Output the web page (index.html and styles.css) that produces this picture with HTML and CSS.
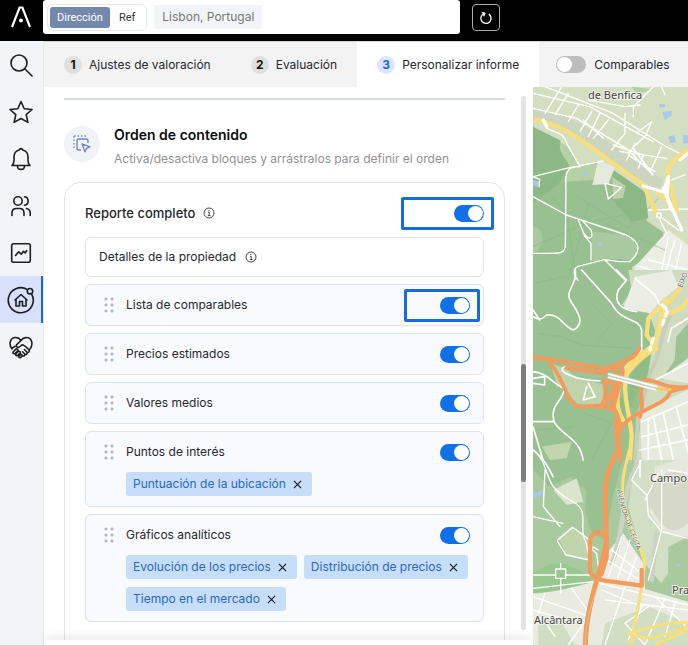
FILE: index.html
```html
<!DOCTYPE html>
<html lang="es">
<head>
<meta charset="utf-8">
<meta name="viewport" content="width=device-width, initial-scale=1">
<title>Personalizar informe</title>
<link rel="stylesheet" href="styles.css">
</head>
<body>
<div class="app">
  <header class="topbar">
    <a class="logo" href="#" aria-label="Inicio">
      <svg width="20" height="22" viewBox="0 0 20 22" fill="none" stroke="#fff" stroke-width="2.2"><path d="M1 21 8.600 1.500h2.800L19 21"/><circle cx="10" cy="14.500" r="2" fill="#fff" stroke="none"/></svg>
    </a>
    <div class="search">
      <div class="mode">
        <button class="mode-btn mode-on" type="button">Dirección</button>
        <button class="mode-btn" type="button">Ref</button>
      </div>
      <span class="place">Lisbon, Portugal</span>
      <input class="search-input" type="text" aria-label="Buscar">
    </div>
    <button class="reload" type="button" aria-label="Restablecer">
      <svg width="14" height="14" viewBox="0 0 14 14" fill="none" stroke="#fff" stroke-width="1.300"><path d="M9.800 3.100A5.100 5.100 0 1 1 5 2.600M2.800 1.400l3.100.9-1.200 3"/></svg>
    </button>
  </header>

  <nav class="side" aria-label="Principal">
    <a class="side-link" href="#" aria-label="Buscar"><svg width="24" height="24" viewBox="0 0 24 24"><circle cx="10" cy="10" r="8"/><path d="m16 16 7 7"/></svg></a>
    <a class="side-link" href="#" aria-label="Favoritos"><svg width="24" height="24" viewBox="0 0 24 24"><path d="m12 1.500 3.200 7.200 7.800.8-5.800 5.200 1.700 7.700L12 18.500l-6.900 3.900 1.700-7.700L1 9.500l7.800-.8z"/></svg></a>
    <a class="side-link" href="#" aria-label="Avisos"><svg width="24" height="24" viewBox="0 0 24 24"><path d="M3 18.500h18c-1.600-1.500-2-3-2-5V10c0-3.700-2.400-6.300-5.300-7a1.750 1.750 0 0 0-3.400 0C7.400 3.700 5 6.300 5 10v3.500c0 2-.4 3.500-2 5zM8.500 19c0 4.500 7 4.500 7 0"/></svg></a>
    <a class="side-link" href="#" aria-label="Contactos"><svg width="24" height="24" viewBox="0 0 24 24"><circle cx="9" cy="7" r="4.200"/><path d="M3 21.500V19c0-3 2-4.500 4.500-4.500h3c2.500 0 4.500 1.500 4.500 4.500v2.500M15.500 2.800c4.800.8 4.800 7.700 0 8.500M17.500 14.500c2.500.6 3.700 2 3.700 4.500v2.500"/></svg></a>
    <a class="side-link" href="#" aria-label="Mercado"><svg width="24" height="24" viewBox="0 0 24 24"><rect x="2.700" y="2.700" width="18.600" height="18.600" rx="2"/><path d="m6.500 14.500 3.200-3.700 2.600 2.400 2.200-2.900 1.500 1.700 1.700-2.300"/></svg></a>
    <a class="side-link side-active" href="#" aria-label="Valoración"><svg width="28" height="28" viewBox="0 0 28 28"><path d="M20.500 3.700A12.500 12.500 0 1 0 24.600 8"/><circle cx="23" cy="5.200" r="2.700"/><path d="m8 14 6-5.500 6 5.500M9 13.200V20h3.500v-4.500h3V20H19v-6.800"/></svg></a>
    <a class="side-link" href="#" aria-label="Colaboración"><svg width="24" height="24" viewBox="0 0 24 24"><path d="M3 14C-.5 9.500 1 2.500 6.500 2.500c2.500 0 4.200 1 5.500 3 1.300-2 3-3 5.500-3C23 2.500 24.500 9.500 21 14M12 5.500 7.500 9.800c-.8 2.500 2 3.200 3.500 1.700l2-1.700c2.500.2 5 3.200 7 5.200 1 1.700-.7 3-2 2.200M15.500 14.500l2.500 2.700c.8 1.500-1 2.800-2.200 1.800l-2.300-2.300M15.800 19c.5 1.500-1.200 2.600-2.500 1.500l-2-2M3 13l3-1.500M4.300 16.700l2.300-2.300c1.300-1.300 3 .3 1.900 1.600l-2.300 2.300c-1.300 1.100-3-.4-1.900-1.600zM7 18.700l2-2c1.300-1.100 2.900.4 1.800 1.600l-1.900 1.900c-1.300 1.100-2.900-.4-1.900-1.500zM10 21l1.300-1.200c1.200-.9 2.500.3 1.600 1.500l-1 1c-1.100.9-2.800-.2-1.900-1.300z"/></svg></a>
  </nav>

  <main class="content">
    <div class="steps">
      <a class="step" href="#"><span class="num">1</span>Ajustes de valoración</a>
      <a class="step" href="#"><span class="num">2</span>Evaluación</a>
      <a class="step step-on" href="#" aria-current="step"><span class="num">3</span>Personalizar informe</a>
      <label class="compare"><input class="toggle toggle-soft" type="checkbox"><span class="compare-text">Comparables</span></label>
    </div>

    <div class="work">
      <section class="panel">
        <div class="scroll">
          <hr class="rule">
          <div class="intro">
            <span class="intro-icon">
              <svg width="20" height="20" viewBox="0 0 20 20" fill="none" stroke="#6d87b5" stroke-width="1.300" stroke-linejoin="round"><path d="M2 2h12" stroke-dasharray="1.500 2"/><path d="M2 2v12" stroke-dasharray="1.500 2"/><path d="M9 16H7a2 2 0 0 1-2-2V7a2 2 0 0 1 2-2h7a2 2 0 0 1 2 2v2"/><path d="m10 9.800 8 3-3.500 1.600-1.600 3.500z"/></svg>
            </span>
            <div>
              <h1 class="title">Orden de contenido</h1>
              <p class="subtitle">Activa/desactiva bloques y arrástralos para definir el orden</p>
            </div>
          </div>

          <div class="report">
            <div class="report-head">
              <label class="report-name" for="t-all">Reporte completo</label>
              <svg class="info" viewBox="0 0 12 12"><circle cx="6" cy="6" r="5"/><path d="M5 5.300h1.200v3.200M4.800 8.600h2.700M5.900 3v1"/></svg>
              <span class="switch switch-marked mark-wide"><input class="toggle" id="t-all" type="checkbox" checked></span>
            </div>
            <ul class="blocks">
              <li class="block block-fixed">
                <span>Detalles de la propiedad</span>
                <svg class="info" viewBox="0 0 12 12"><circle cx="6" cy="6" r="5"/><path d="M5 5.300h1.200v3.200M4.800 8.600h2.700M5.900 3v1"/></svg>
              </li>
              <li class="block">
                <div class="block-head"><span class="grip"></span><label for="t1">Lista de comparables</label><span class="switch switch-marked"><input class="toggle" id="t1" type="checkbox" checked></span></div>
              </li>
              <li class="block">
                <div class="block-head"><span class="grip"></span><label for="t2">Precios estimados</label><span class="switch"><input class="toggle" id="t2" type="checkbox" checked></span></div>
              </li>
              <li class="block">
                <div class="block-head"><span class="grip"></span><label for="t3">Valores medios</label><span class="switch"><input class="toggle" id="t3" type="checkbox" checked></span></div>
              </li>
              <li class="block">
                <div class="block-head"><span class="grip"></span><label for="t4">Puntos de interés</label><span class="switch"><input class="toggle" id="t4" type="checkbox" checked></span></div>
                <div class="tags">
                  <span class="tag">Puntuación de la ubicación<button class="tag-x" type="button" aria-label="Quitar"><svg viewBox="0 0 10 10"><path d="m1 1 8 8M9 1 1 9"/></svg></button></span>
                </div>
              </li>
              <li class="block">
                <div class="block-head"><span class="grip"></span><label for="t5">Gráficos analíticos</label><span class="switch"><input class="toggle" id="t5" type="checkbox" checked></span></div>
                <div class="tags">
                  <span class="tag">Evolución de los precios<button class="tag-x" type="button" aria-label="Quitar"><svg viewBox="0 0 10 10"><path d="m1 1 8 8M9 1 1 9"/></svg></button></span>
                  <span class="tag">Distribución de precios<button class="tag-x" type="button" aria-label="Quitar"><svg viewBox="0 0 10 10"><path d="m1 1 8 8M9 1 1 9"/></svg></button></span>
                  <span class="tag">Tiempo en el mercado<button class="tag-x" type="button" aria-label="Quitar"><svg viewBox="0 0 10 10"><path d="m1 1 8 8M9 1 1 9"/></svg></button></span>
                </div>
              </li>
            </ul>
          </div>
        </div>
        <div class="track"><div class="thumb"></div></div>
        <div class="foot"></div>
      </section>

      <section class="map" aria-label="Mapa">
        <svg viewBox="0 0 155 558" preserveAspectRatio="xMinYMin slice" fill="none" stroke-linecap="round" stroke-linejoin="round">
          <rect width="155" height="558" fill="#98c090"/>
          <!-- north: Benfica and the park edge -->
          <g transform="translate(-8 -7) scale(.33333)">
            <path d="M24 20H489V600H330l-10-38 90-60 5-45-50-35-5-80-80-60-60-16-90-10-30-60-76-36z" fill="#d3dfc0"/>
            <path d="M24 140l80 40 28 75-30 55-78 60z" fill="#8bb885"/>
            <path d="m265 270 95 65 10 80-50 10-60-70z" fill="#8bb885"/>
            <path d="M24 90c120 5 220 90 300 150l90 60-10 30c-120-50-200-150-380-215z" fill="#cbd5bf"/>
            <path d="M105 190c50 10 40 60 60 70l60-20-20 60-90 5 20-45c-15-30-35-40-30-70z" fill="#b7d0a5"/>
            <path d="m220 240 50 22-20 50-48 3z" fill="#e6e9de"/>
            <path d="m262 290 40 28-8 35-30 5z" fill="#bcd2a8"/>
            <path d="m200 455 100 10c50 15 50 40 20 75l-80-5-40 10z" fill="#a9caa0"/>
            <path d="M24 440c40 5 30 60 10 75h-10z" fill="#a9caa0"/>
            <path d="m330 560 100-110 59 45v105H325z" fill="#eceee6"/>
            <path d="m320 20 60 8-45 14z" fill="#b5cfa4"/>
            <g stroke="#8bb787" stroke-width="2"><path d="m24 290 100 110 30 200M150 345l160 100 90-90M24 500l160-70 130-30M190 370l-60 230M240 430l180 80"/></g>
            <g fill="#a9c6ec"><path d="M402 72h18v10h-18zM412 96l28-4v14l-20 14zM430 170l18-4 4 20-16 4zM474 165h15v25h-15zM25 300l20 5-8 16-12-3zM172 277l16-4v8l-12 6zM220 490h12v8h-12z"/></g>
            <g stroke="#fff" stroke-width="4">
              <path d="m24 85 130 30 150 90 80 80M60 20l200 78 160 100 50 25M24 40l170 40 190 105M110 20 60 100M130 40 90 105M160 75l-30 50M200 95l-35 60M190 60l110 20 45-5M225 100l-35 70M250 120l-45 55M300 100v60l-40 50M175 120l60 55M265 195l90 30-15 40M285 215l140 20M310 225l80 50M325 205l60 80M330 190l-25 50M410 200l-30 65M385 20l-60 60v30M340 155l40-30-20 45-35 30M410 20l10 25"/>
              <path d="M55 125c10 40 60 20 70 65l40 70c-50 0-43 30-42 70l-2 165c0 30-20 25-97 25M24 350l100 55 180 60c50 25 40 55 10 80h-30l-45-6-80 20c-20 10-10 30 0 42M24 290l100-25 110-22M160 420l20 50 18 20v50M170 420l28 30c10 30-10 30-20 10M240 312l10 45 40-35-50-12M24 290l20 8-2 22M240 540l60 60M370 390l119-3M405 400v20l20 40-20 25M400 405l60 45M430 470l-25 130M450 480l-35 120M470 490l-25 110M370 540l119 30M345 560l144 40M480 285l-40 15"/>
            </g>
            <path d="M24 118c110 15 200 110 330 195l40 85M489 212c-60 25-75 70-50 110l15 70M390 330l65 60" stroke="#f8df7c" stroke-width="13"/>
            <path d="m355 318 60 18 15-45M415 335l15-45M415 325l55 125M430 300l-5 50 15 40M465 240l24-20M55 120l10 20" stroke="#fff" stroke-width="10"/>
            <circle cx="402" cy="406" r="7" stroke="#fff" stroke-width="5" fill="#d3dfc0"/>
          </g>
          <!-- middle: motorway junction -->
          <g transform="translate(-8 183) scale(.33333)">
            <path d="M310 0h179v570H330l20-130 10-70 30-190-20-55-80-20 30-40z" fill="#cfdcbf"/>
            <path d="m330 20 110-20 20 50-60 50-25 30-80-15z" fill="#eceee6"/>
            <path d="M489 160v150l-80 20 40-60 5-70z" fill="#9dc395"/>
            <path d="m405 325 84-60v75l-60-10zM380 410l109-50v210H350l-5-130z" fill="#e7ebdf"/>
            <path d="m75 280 60 20 45 30 65 15-10 70-80-15-60-60z" fill="#bfd4ac"/>
            <path d="m120 295 130 20-15 20-70-5z" fill="#9cc494"/>
            <path d="m50 530 90-15-15 50-50 5z" fill="#c2d6ae"/>
            <path d="m330 300 50-60-10 60-70 150-30-10 30-90z" fill="#8fbd88"/>
            <path d="M435 140c-30 40-20 100-60 170l-35 130-10 130" stroke="#c7ceba" stroke-width="12"/>
            <g stroke="#8bb787" stroke-width="2"><path d="m40 190 70 10 60 25 150 10M200 100l60 60-40 50M24 40l100-20M180 430l80 30-60 110M24 480l120-10"/></g>
            <g stroke="#fff" stroke-width="5">
              <path d="M150 0c10 40-30 60-15 90 20 30 50 70 10 90-30-10-40-50-80-45-20 20-30 10-41 5M24 120l20 30M170 0l90 100c30 60 80 40 90 80v60l-45 60M275 0l30 30-25 30c-15 40 10 60 55 65M330 25l60 50 30 60M24 305c50 5 60 40 95 50-5 40-45 45-32 100M24 455h63c20 40 80 50 87 115M24 470l30 100M24 325l35-5v25l-35-5M185 350l-10 40 35-10-20-40M489 145l-50 30-10 40M350 455l139-60M370 450v120M385 440l25 130M415 430l30 140M350 500l139-35M345 540l144-30M455 415l34 130M390 330l99-50"/>
              <path d="M125 290c-40 5 10 40 100 43"/>
            </g>
            <path d="M465 55c-30 50-60 50-95 90l-5 50 30 40c-40 20-80 60-90 80-15 50 10 120 15 180l-5 75M489 90c-40 60-80 20-85 70-5 100-80 80-110 150-20 60-25 100 0 140M420 90l-20 90" stroke="#f8df7c" stroke-width="13"/>
            <path d="m412 105 16 15-20 55M385 205l-10 35" stroke="#fff" stroke-width="10" stroke-dasharray="15 12"/>
            <g stroke="#f39b5d" stroke-width="12">
              <path d="M24 262c90 10 150 25 215 33 60-10 35 50 25 80-10 50 20 40 20 100l-8 95M75 280c40 40 50 120 85 130 35 0 90-10 100 10M125 293l115 17M235 300c50-25 90-25 108-65M240 300c60-30 60 0 45 40l-20 70M238 335c40-10 30 45 0 60v10M235 330c15 40 0 70-10 85M285 480c30-60 140-70 150-115l54-15M345 440c20-60-20-110 20-110 35 0 50 30 124 20"/>
              <path d="m275 450 8 120" stroke-width="18"/>
            </g>
            <path d="m250 316 145 38" stroke="#c8cfc0" stroke-width="18" stroke-linecap="butt"/>
            <path d="m250 312 145 38M250 322l145 38" stroke="#fff" stroke-width="5"/>
            <path d="m397 357 38 2" stroke="#f5c768" stroke-width="9"/>
          </g>
          <!-- south: Alcântara -->
          <g transform="translate(-8 363) scale(.33333)">
            <path d="m24 60 50 50 60-30 50 40 60 90 50-180h195v570H24z" fill="#a9ca9f"/>
            <path d="m190 60 95-40-45 250-40-20-20-70z" fill="#98c090"/>
            <path d="M24 370c70-50 110-30 175 15l24 20-24 40H24z" fill="#98c790"/>
            <path d="m100 260 40-30 60 45-10 55-65-15z" fill="#c0d5ad"/>
            <path d="m85 120 70-35 20 70-50 10z" fill="#dbe4cc"/>
            <path d="M24 430c70 0 160-30 220-45l110 30 135 40v130H24z" fill="#e9ebe0"/>
            <path d="m240 520 130-50 119 50v65H230zM40 520l60-20 50 85H40z" fill="#d0dfc3"/>
            <path d="m245 310 50-60 60 90 5 80-130-30z" fill="#eceee6"/>
            <path d="M330 30h159v250l-80 120-50-60-50-170z" fill="#d3dfc4"/>
            <path d="m390 50 99-30v240l-70-10-45-60z" fill="#e6e8dd"/>
            <path d="M380 100c50-50 100-40 109-10v130c-30 25-55 30-80 0-30-40-60-80-29-120z" fill="#d6d9c7"/>
            <path d="m430 290 59-30v120l-60 10z" fill="#a9ca9f"/>
            <path d="M24 130l30-10-2 15-28 10zM450 340l20 3-10 8z" fill="#a9c6ec"/>
            <path d="M345 30c-60 90-40 200-85 310M395 250l-15 140" stroke="#cbd2c1" stroke-width="14"/>
            <g stroke="#fff" stroke-width="4">
              <path d="M24 0c60 50 20 100 110 150 70 30 20 80 50 130l15 80M60 60l-5 110 50 60M24 200l90 20M98 270l45-38 55 40M98 275l25 40 70 15M24 375h66M125 375h79M107 340v15M107 388v42M92 357h30v28H92zM24 415l180-20 285 70M350 30l-30 60 45 45 5 60 40 50 79 20M410 60v180l-40 150M430 60l59 10M360 150l40-80M24 440l170 60M60 430l-20 60M140 415l50 70M24 480l140 40M50 500l40 60M230 420l120 50-40 100M240 450l249 30M190 500l-60 85M300 410l-60 175M370 470l-70 50 60 65M390 440l99 95M420 445l-60 140M450 460l-30 100M245 330l100 60M260 300l90 70M290 260l-40 120M315 270l-40 125M335 320l-30 80M220 300c-30-20-20 0-5 10l5 40"/>
            </g>
            <path d="M345 30v50M24 0c40 30 60 80 60 80" stroke="#fff" stroke-width="5"/>
            <path d="M313 0c-20 80-20 90-20 110M293 110c-10 80 70 190 65 240-10 100-30 160-40 235M489 518c-70-5-120 20-170 30M489 530c-50 10-100 55-180 20M489 540l-100 45" stroke="#f8df7c" stroke-width="9"/>
            <path d="M283 0c-60 80-38 160-40 250 10 60-60 190-62 335" stroke="#f39b5d" stroke-width="15"/>
            <path d="M240 260c-20-25-45-10-45 20v75c0 20 10 30 45 37l110 15M350 405v-45M200 262c10-30 55-15 45 20v40l-15 50" stroke="#f39b5d" stroke-width="13"/>
            <path d="M222 395c-20 70-40 100-41 190" stroke="#d7c3a0" stroke-width="3"/>
          </g>
          <defs><path id="ceuta" d="M84 403c5 28 14 44 27 80"/></defs>
          <g class="map-road"><text><textPath href="#ceuta">AVENIDA DE CEUTA</textPath></text><text transform="translate(149 201) rotate(-68)">EIXO</text></g>
          <g class="map-place"><text x="55" y="12">de Benfica</text><text x="117" y="395">Campo</text><text x="139" y="507">Pra</text><text x="1" y="537">Alcântara</text></g>
        </svg>
      </section>
    </div>
  </main>
</div>
</body>
</html>
```
FILE: styles.css
```css
* { box-sizing: border-box; }

body {
  margin: 0;
  font: 12px/18px Inter, "Liberation Sans", sans-serif;
  color: #25282c;
  background: #fff;
}

button, input { font: inherit; margin: 0; }
a { color: inherit; text-decoration: none; }

.app {
  display: grid;
  grid-template: 41px minmax(0, 1fr) / 44px minmax(0, 1fr);
  height: 100vh;
  overflow: hidden;
}

/* Top bar */
.topbar {
  grid-column: 1 / -1;
  display: flex;
  align-items: flex-start;
  background: #000;
}

.logo { width: 43px; padding: 6px 0 0 11px; }
.logo svg { display: block; }

.search {
  flex: 0 1 417px;
  display: flex;
  align-items: center;
  gap: 7px;
  height: 34px;
  padding: 0 4px;
  background: #fff;
  border-radius: 3px;
}

.mode {
  display: flex;
  padding: 2px;
  border: 1px solid #e4e8f0;
  border-radius: 6px;
}

.mode-btn {
  padding: 0 9px;
  height: 21px;
  border: 0;
  border-radius: 3px;
  background: none;
  font: 11px/21px Roboto, sans-serif;
  color: #333;
}

.mode-on { padding: 0 7px; background: #7488ab; color: #fff; }

.place {
  padding: 3px 8px;
  border-radius: 3px;
  background: #f3f4f7;
  color: #777;
}

.search-input { flex: 1; min-width: 0; border: 0; outline: 0; }

.reload {
  display: grid;
  place-items: center;
  width: 28px;
  height: 27px;
  margin: 4px 0 0 12px;
  padding: 0;
  background: #000;
  border: 1px solid #aaa;
  border-radius: 4px;
}

/* Sidebar */
.side {
  background: #f2f4f8;
  border-right: 1px solid #e6e8ec;
}

.side-link {
  display: grid;
  place-items: center;
  height: 47px;
  padding-right: 1px;
}

.side-link svg {
  fill: none;
  stroke: #1c1e22;
  stroke-width: 1.6;
  stroke-linecap: round;
  stroke-linejoin: round;
}

.side-active {
  padding-right: 0;
  background: #d8e0fb;
  border-right: 2px solid #1668dc;
}

/* Steps */
.content { display: flex; flex-direction: column; min-height: 0; }

.steps { display: flex; background: #f3f3f3; border-top: 1px solid #d5d5d5; }

.step {
  display: flex;
  align-items: center;
  gap: 7px;
  height: 45px;
  padding: 0 20px;
  white-space: nowrap;
}

.step-on { background: #fff; }

.num {
  width: 18px;
  height: 18px;
  border-radius: 50%;
  background: #dfdfdf;
  font-weight: 700;
  text-align: center;
  color: #111;
}

.step-on .num { background: #dbe6fb; color: #1f66d6; }

.compare {
  flex: 1;
  display: flex;
  align-items: center;
  gap: 8px;
  padding-left: 17px;
}

/* Toggle */
.toggle {
  appearance: none;
  display: block;
  flex: none;
  width: 30px;
  height: 17px;
  padding: 1px;
  border-radius: 9px;
  background: #bdbdbd;
}

.toggle::before {
  content: "";
  display: block;
  width: 15px;
  height: 15px;
  border-radius: 50%;
  background: #fff;
}

.toggle:checked { background: #1070e6; }
.toggle:checked::before { margin-left: auto; }

/* Panel */
.work {
  flex: 1;
  display: grid;
  grid-template-columns: 489fr 155fr;
  min-height: 0;
}

.panel {
  display: grid;
  grid-template: minmax(0, 1fr) 5px / minmax(0, 1fr) 12px;
  min-height: 0;
}

.scroll { overflow: hidden; padding: 11px 16px 0 20px; }

.rule { height: 2px; margin: 0; border: 0; background: #d9dcde; }

.intro {
  display: flex;
  gap: 14px;
  padding: 24px 0 12px;
}

.intro-icon {
  display: grid;
  place-items: center;
  width: 36px;
  height: 36px;
  margin-top: 2px;
  border-radius: 50%;
  background: #f1f3f8;
}

.title { margin: 0; font-size: 14px; line-height: 22px; font-weight: 600; color: #0d0e10; }
.subtitle { margin: 2px 0 0; line-height: 22px; color: #929292; }

.report {
  padding: 12px 20px 40px;
  border: 1px solid #e2e5e9;
  border-radius: 16px;
}

.report-head { display: flex; align-items: center; height: 42px; gap: 8px; padding-bottom: 6px; }
.report-name { font-size: 13px; font-weight: 500; }

.info { width: 12px; height: 12px; fill: none; stroke: #444; }

.switch { position: relative; margin-left: auto; }

/* Highlight frame around a switch */
.switch-marked::after {
  content: "";
  position: absolute;
  inset: -8px -10px -8px -36px;
  border: 3px solid #166cdf;
  border-radius: 2px;
  pointer-events: none;
}

.mark-wide::after { left: -53px; }

.blocks {
  display: flex;
  flex-direction: column;
  gap: 7px;
  margin: 0;
  padding: 0;
  list-style: none;
}

.block {
  padding: 0 13px;
  border: 1px solid #dfe3ea;
  border-radius: 6px;
  background: #f9fafe;
}

.block-fixed {
  display: flex;
  align-items: center;
  gap: 9px;
  height: 40px;
  background: #fff;
}

.block-head { display: flex; align-items: center; height: 40px; padding-left: 4px; }

.grip {
  width: 12px;
  height: 18px;
  margin-right: 11px;
  background: radial-gradient(circle at 3px 3px, #b4b7c0 1px, transparent 2px) 0 0 / 6px 6px;
}

.tags { display: flex; flex-wrap: wrap; gap: 8px 7px; padding: 0 0 10px 27px; }

.tag {
  display: flex;
  align-items: center;
  gap: 7px;
  height: 24px;
  padding: 0 10px 0 7px;
  border-radius: 3px;
  background: #c6defa;
  color: #2d69bd;
  white-space: nowrap;
}

.tag-x { display: block; width: 9px; height: 9px; padding: 0; border: 0; background: none; }
.tag-x svg { display: block; width: 9px; height: 9px; stroke: #17191c; stroke-width: 1.3; }

.track { margin: 9px 7px 10px 0; background: #e3e3e3; border-radius: 3px; }
.thumb { margin-top: 268px; height: 118px; background: #7d7d7d; border-radius: 3px; }

.foot { grid-column: 1 / -1; background: #fff; box-shadow: 0 -3px 8px rgba(0, 0, 0, .12); }

/* Map */
.map { position: relative; overflow: hidden; min-height: 0; }
.map svg { display: block; width: 100%; height: 100%; }
.map-place { font: 11px "Noto Sans", sans-serif; fill: #444; stroke: #f3f5ec; stroke-width: 2px; paint-order: stroke; }
.map-road { font: 7px "Noto Sans", sans-serif; fill: #666; stroke: #f3f5ec; stroke-width: 1px; paint-order: stroke; }
```
